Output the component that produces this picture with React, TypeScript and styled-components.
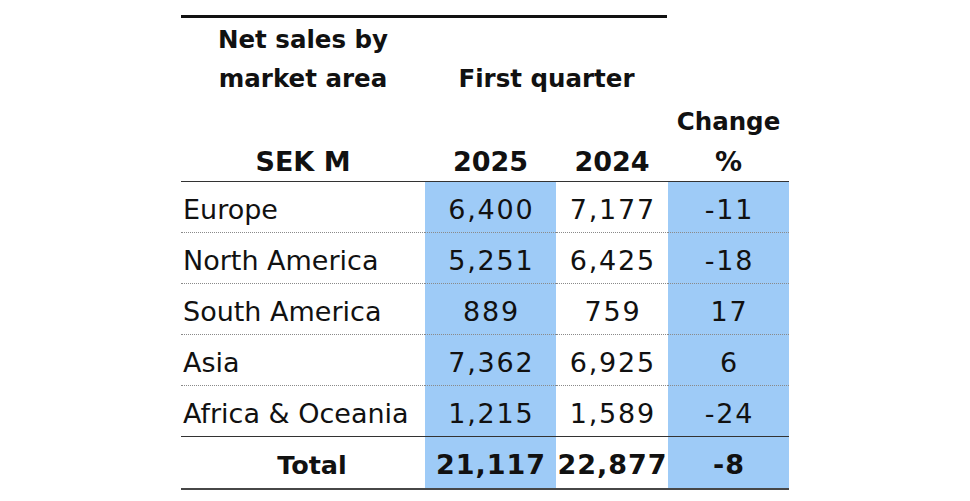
import React from "react";
import styled, { createGlobalStyle, css } from "styled-components";

const GlobalStyle = createGlobalStyle`
  html, body { margin: 0; padding: 0; background: #ffffff; }
  body { font-family: "DejaVu Sans", "Liberation Sans", sans-serif; color: #111111; }
`;

const COLS = "244px 131px 112px 121px";
const BLUE = "#9ecbf7";

const Page = styled.div`
  width: 970px;
  height: 501px;
  box-sizing: border-box;
  padding-top: 15px;
  display: flex;
  justify-content: center;
`;

const Table = styled.div`
  width: 608px;
  display: flex;
  flex-direction: column;
`;

const TopRule = styled.div`
  width: 486px;
  height: 3px;
  background: #111111;
`;

const Header = styled.div`
  display: grid;
  grid-template-columns: ${COLS};
  grid-template-rows: 38px 40px 45px 37px;
  padding-top: 3px;
  border-bottom: 1px solid #333333;
`;

const HeadCell = styled.div<{ $col: string; $row: string; $big?: boolean; $lh?: number }>`
  grid-column: ${(p) => p.$col};
  grid-row: ${(p) => p.$row};
  text-align: center;
  font-weight: 700;
  white-space: nowrap;
  font-size: ${(p) => (p.$big ? "27px" : "24.5px")};
  line-height: ${(p) => p.$lh ?? (p.$big ? 35 : 38)}px;
`;

const HeadStack = styled.div`
  display: flex;
  flex-direction: column;
`;

const HeadLine = styled.span<{ $h: number }>`
  display: block;
  height: ${(p) => p.$h}px;
  line-height: ${(p) => p.$h}px;
`;

type Line = "dotted" | "solid" | "thick";

const lineStyle = (l: Line) =>
  l === "dotted"
    ? css`border-bottom: 1px dotted #8a8a8a;`
    : l === "solid"
    ? css`border-bottom: 1px solid #333333;`
    : css`border-bottom: 2px solid #474747;`;

const Row = styled.div<{ $line: Line }>`
  display: grid;
  grid-template-columns: ${COLS};
  height: ${(p) => (p.$line === "thick" ? 52 : 51)}px;
  & > * {
    ${(p) => lineStyle(p.$line)}
  }
`;

const Cell = styled.div<{ $shade?: boolean; $bold?: boolean; $align?: "left" | "center" }>`
  box-sizing: border-box;
  padding-top: 5px;
  line-height: 45px;
  font-size: 27px;
  white-space: nowrap;
  text-align: ${(p) => p.$align ?? "center"};
  padding-left: ${(p) => (p.$align === "left" ? "2px" : "0")};
  background: ${(p) => (p.$shade ? BLUE : "transparent")};
  font-weight: ${(p) => (p.$bold ? 700 : 400)};
`;

const Num = styled.span<{ $bold?: boolean }>`
  letter-spacing: ${(p) => (p.$bold ? "1px" : "1.8px")};
  margin-right: ${(p) => (p.$bold ? "-1px" : "-1.8px")};
`;

const TotalLabel = styled.span`
  font-size: 25.5px;
  padding-left: 18px;
`;

type Data = { area: string; y25: string; y24: string; ch: string };

const rows: Data[] = [
  { area: "Europe", y25: "6,400", y24: "7,177", ch: "-11" },
  { area: "North America", y25: "5,251", y24: "6,425", ch: "-18" },
  { area: "South America", y25: "889", y24: "759", ch: "17" },
  { area: "Asia", y25: "7,362", y24: "6,925", ch: "6" },
  { area: "Africa & Oceania", y25: "1,215", y24: "1,589", ch: "-24" },
];

export default function App() {
  return (
    <>
      <GlobalStyle />
      <Page>
        <Table>
          <TopRule />
          <Header>
            <HeadCell $col="1" $row="1 / 3">
              <HeadStack>
                <HeadLine $h={38}>Net sales by</HeadLine>
                <HeadLine $h={40}>market area</HeadLine>
              </HeadStack>
            </HeadCell>
            <HeadCell $col="2 / 4" $row="2" $lh={40}>
              First quarter
            </HeadCell>
            <HeadCell $col="4" $row="3" $lh={45}>
              Change
            </HeadCell>
            <HeadCell $col="1" $row="4" $big>
              SEK M
            </HeadCell>
            <HeadCell $col="2" $row="4" $big>
              2025
            </HeadCell>
            <HeadCell $col="3" $row="4" $big>
              2024
            </HeadCell>
            <HeadCell $col="4" $row="4" $big>
              %
            </HeadCell>
          </Header>
          {rows.map((r, i) => (
            <Row key={r.area} $line={i === rows.length - 1 ? "solid" : "dotted"}>
              <Cell $align="left">{r.area}</Cell>
              <Cell $shade>
                <Num>{r.y25}</Num>
              </Cell>
              <Cell>
                <Num>{r.y24}</Num>
              </Cell>
              <Cell $shade>
                <Num>{r.ch}</Num>
              </Cell>
            </Row>
          ))}
          <Row $line="thick">
            <Cell $bold>
              <TotalLabel>Total</TotalLabel>
            </Cell>
            <Cell $shade $bold>
              <Num $bold>21,117</Num>
            </Cell>
            <Cell $bold>
              <Num $bold>22,877</Num>
            </Cell>
            <Cell $shade $bold>
              <Num $bold>-8</Num>
            </Cell>
          </Row>
        </Table>
      </Page>
    </>
  );
}
